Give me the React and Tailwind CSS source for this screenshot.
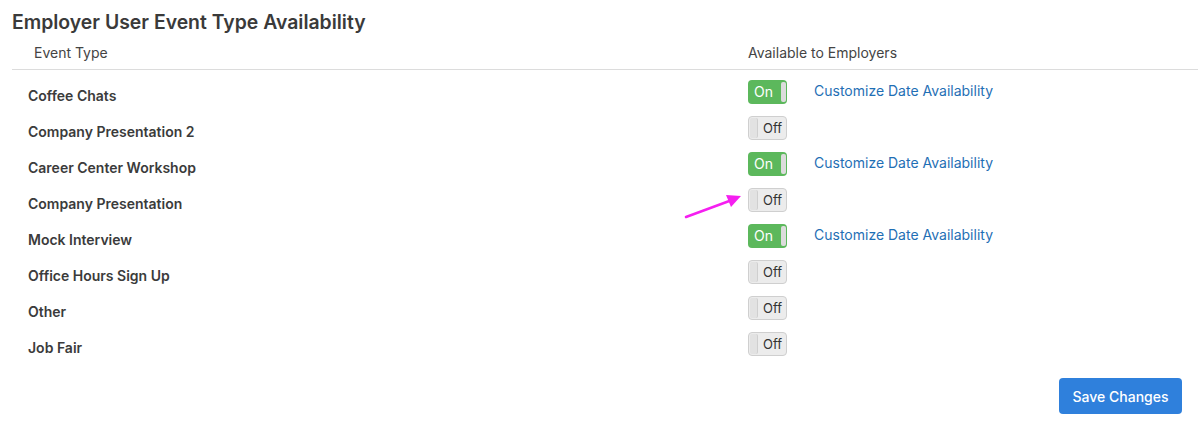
import React from "react";

const rows = [
  { name: "Coffee Chats", on: true },
  { name: "Company Presentation 2", on: false },
  { name: "Career Center Workshop", on: true },
  { name: "Company Presentation", on: false, arrow: true },
  { name: "Mock Interview", on: true },
  { name: "Office Hours Sign Up", on: false },
  { name: "Other", on: false },
  { name: "Job Fair", on: false },
];

function Toggle({ on }) {
  if (on) {
    return (
      <div className="flex h-[24px] w-[39px] items-center rounded-[4px] bg-[#5cb85c] pl-[6px] pr-[1px]">
        <span className="flex-1 text-[14px] leading-none text-white">On</span>
        <span className="h-[20px] w-[5px] rounded-[2px] bg-[#dcdcdc]" />
      </div>
    );
  }
  return (
    <div className="flex h-[24px] w-[39px] items-center rounded-[4px] border border-[#cfcfcf] bg-[#ececec] pl-[1px] pr-[4px]">
      <span className="h-[20px] w-[8px] rounded-[2px] border-r border-[#cfcfcf] bg-[#e2e2e2]" />
      <span className="flex-1 text-right text-[13px] leading-none text-[#333]">Off</span>
    </div>
  );
}

function Arrow() {
  return (
    <svg className="absolute left-[-64px] top-[2px]" width="62" height="30" viewBox="0 0 62 30">
      <line x1="2" y1="27" x2="48" y2="10" stroke="#f51ff0" strokeWidth="2.5" strokeLinecap="round" />
      <polygon points="57,6 42,5 47,17" fill="#f51ff0" />
    </svg>
  );
}

export default function App() {
  return (
    <div className="min-h-screen bg-white font-['Inter',sans-serif] text-[#333]">
      <h1 className="pl-[12px] pt-[10px] text-[19.4px] font-semibold leading-[24px] text-[#3a3a3a]">
        Employer User Event Type Availability
      </h1>

      <div className="ml-[12px] mt-[8px]">
        {/* header */}
        <div className="grid h-[28px] grid-cols-[736px_1fr] border-b border-[#dcdcdc] pt-[2px] text-[14px] text-[#444]">
          <div className="pl-[22px] leading-[17px]">Event Type</div>
          <div className="leading-[17px]">Available to Employers</div>
        </div>

        {/* rows */}
        <div className="pt-[10px]">
          {rows.map((r) => (
            <div key={r.name} className="grid h-[36px] grid-cols-[736px_1fr]">
              <div className="pl-[16px] pt-[7px] text-[14px] font-semibold leading-[18px] text-[#3b3b3b]">
                {r.name}
              </div>
              <div className="relative flex items-start">
                {r.arrow && <Arrow />}
                <Toggle on={r.on} />
                {r.on && (
                  <a className="ml-[27px] mt-[2px] text-[14px] leading-[18px] text-[#1f6fb5]">
                    Customize Date Availability
                  </a>
                )}
              </div>
            </div>
          ))}
        </div>

        <div className="flex justify-end pr-[16px] pt-[10px]">
          <button className="h-[36px] w-[123px] rounded-[4px] bg-[#2f80dc] text-[14px] font-medium text-white">
            Save Changes
          </button>
        </div>
      </div>
    </div>
  );
}
